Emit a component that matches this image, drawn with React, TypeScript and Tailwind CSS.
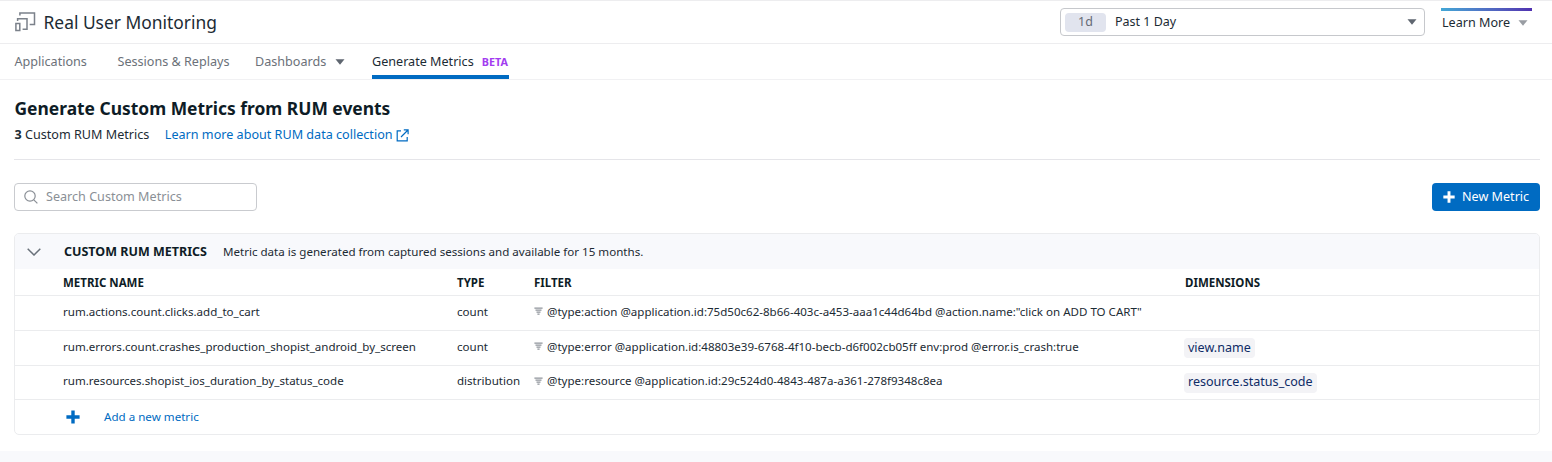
import React from "react";

const rows = [
  {
    name: "rum.actions.count.clicks.add_to_cart",
    type: "count",
    filter: '@type:action @application.id:75d50c62-8b66-403c-a453-aaa1c44d64bd @action.name:"click on ADD TO CART"',
    dimension: "",
  },
  {
    name: "rum.errors.count.crashes_production_shopist_android_by_screen",
    type: "count",
    filter: "@type:error @application.id:48803e39-6768-4f10-becb-d6f002cb05ff env:prod @error.is_crash:true",
    dimension: "view.name",
  },
  {
    name: "rum.resources.shopist_ios_duration_by_status_code",
    type: "distribution",
    filter: "@type:resource @application.id:29c524d0-4843-487a-a361-278f9348c8ea",
    dimension: "resource.status_code",
  },
];

function Caret({ className }: { className: string }) {
  return (
    <svg viewBox="0 0 10 6" className={className} fill="currentColor">
      <path d="M0.5 0.3h9L5 5.7z" />
    </svg>
  );
}

function Plus({ className }: { className: string }) {
  return (
    <svg viewBox="0 0 14 14" className={className} fill="none" stroke="currentColor" strokeWidth="3.4">
      <path d="M7 0.4v13.2M0.4 7h13.2" />
    </svg>
  );
}

function FilterIcon() {
  return (
    <svg viewBox="0 0 9 9" className="size-[9px] shrink-0 text-[#8f949b]" fill="none" stroke="currentColor" strokeWidth="1.25">
      <path d="M0.4 1h8.2M1.5 3h6M2.5 5h4M3.4 7h2.2" />
    </svg>
  );
}

export default function App() {
  return (
    <div className="h-[462px] w-[1552px] overflow-hidden bg-white font-['Noto_Sans',sans-serif] text-[#1c2b34] whitespace-nowrap">
      <header className="flex h-11 items-center border-y border-[#ededef] pl-[15px] pr-5">
        <svg viewBox="0 0 21 20" className="h-5 w-[21px]" fill="none" stroke="#7b818a" strokeWidth="1.5">
          <path d="M4.9 3.4V1h14.6v11.6h-4.8" />
          <path d="M2.6 9V6.8h9.4v10.4H7.6" />
          <path d="M0.9 11.4h3.9v7.2H0.9z" />
        </svg>
        <h1 className="ml-[7.5px] pt-px text-[17.4px]">Real User Monitoring</h1>
        <div className="ml-auto flex h-7 w-[365px] items-center rounded-[4px] border border-[#c6c8cc] pl-1 pr-[7px] text-[12.5px]">
          <span className="flex h-[19px] w-[41px] items-center justify-center rounded-[4px] bg-[#e1e4ee] text-[#656b75]">1d</span>
          <span className="ml-[9px]">Past 1 Day</span>
          <Caret className="ml-auto h-[6px] w-[10px] text-[#5f6670]" />
        </div>
        <div className="ml-4 w-[91px] self-start pt-[7px]">
          <div className="h-[3px] bg-linear-to-r from-[#41a7d6] to-[#5030b0]" />
          <div className="flex h-[23px] items-center text-[12.6px]">
            <span className="ml-px pt-px">Learn More</span>
            <Caret className="ml-2 h-[6px] w-[10px] text-[#999da3]" />
          </div>
        </div>
      </header>

      <nav className="flex h-9 border-b border-[#f1f1f3] pl-[14.5px] text-[12.6px] text-[#6b7179]">
        <span className="flex w-[103px] items-center pt-px">Applications</span>
        <span className="flex w-[137.5px] items-center pt-px">Sessions &amp; Replays</span>
        <span className="flex w-[117px] items-center pt-px">
          Dashboards
          <Caret className="ml-[9px] h-[6px] w-[10px] text-[#5f6670]" />
        </span>
        <span className="flex w-[137px] items-center border-b-4 border-[#006bc2] pt-[5px] text-[#1c2b34]">
          Generate Metrics
          <b className="ml-2 text-[10.8px] font-bold text-[#a23cf0]">BETA</b>
        </span>
      </nav>

      <main className="pr-3 pl-[14px]">
        <h2 className="mt-4 h-6 pl-[0.5px] text-[17.42px] leading-6 font-bold text-[#0e1c26]">Generate Custom Metrics from RUM events</h2>
        <div className="mt-[5px] flex h-5 items-center pl-[0.5px] text-[12.6px]">
          <span><b>3</b> Custom RUM Metrics</span>
          <a className="ml-[15.5px] text-[#006bc2]">Learn more about RUM data collection</a>
          <svg viewBox="0 0 13 13" className="ml-[3.5px] size-[13px] text-[#006bc2]" fill="none" stroke="currentColor" strokeWidth="1.2">
            <path d="M5 1.8H1.2v10h10V8M7.8 0.9h4.3v4.3M12 1L5 8" />
          </svg>
        </div>
        <div className="mt-[14px] border-t border-[#e5e5e9]" />
        <div className="mt-[23px] flex h-7 justify-between">
          <div className="flex w-[243px] items-center rounded-[4px] border border-[#c9cbcf] pl-[9px] text-[12.6px] text-[#8a8f96]">
            <svg viewBox="0 0 14 14" className="mr-2 size-[14px]" fill="none" stroke="currentColor" strokeWidth="1.2">
              <circle cx="6" cy="6" r="5.2" />
              <path d="M9.8 9.8l3.6 3.6" />
            </svg>
            <span className="pt-px">Search Custom Metrics</span>
          </div>
          <button className="flex w-[108px] items-center rounded-[4px] bg-[#006bc2] pl-[11px] text-[12.6px] text-white">
            <Plus className="mr-[7px] size-[12px]" />
            <span className="pt-px">New Metric</span>
          </button>
        </div>

        <section className="mt-[22px] h-[202px] overflow-hidden rounded-[5px] border border-[#ebecee]">
          <div className="flex h-[35px] items-center bg-[#f8f9fc] pl-3">
            <svg viewBox="0 0 14 8" className="h-2 w-[14px]" fill="none" stroke="#69717a" strokeWidth="1.5">
              <path d="M0.7 0.8L7 7l6.3-6.2" />
            </svg>
            <b className="ml-[23px] pt-0.5 text-[12.5px] text-[#0e1c26]">CUSTOM RUM METRICS</b>
            <span className="ml-[16px] pt-px text-[11.58px]">Metric data is generated from captured sessions and available for 15 months.</span>
          </div>
          <div className="grid h-[27px] grid-cols-[394px_77px_651px_1fr] items-center border-b border-[#ebecee] pt-0.5 pl-12 text-[11.5px] font-bold text-[#0e1c26]">
            <span>METRIC NAME</span>
            <span>TYPE</span>
            <span>FILTER</span>
            <span>DIMENSIONS</span>
          </div>
          {rows.map((row) => (
            <div key={row.name} className="grid h-[35px] grid-cols-[394px_77px_651px_1fr] items-center border-b border-[#ebecee] pl-12 text-[11.56px] last-of-type:h-[34px]">
              <span className="pb-[3px]">{row.name}</span>
              <span className="pb-[3px]">{row.type}</span>
              <span className="flex items-center gap-[4px] pb-[3px]">
                <FilterIcon />
                {row.filter}
              </span>
              {row.dimension && (
                <span className="-ml-px flex h-5 w-fit items-center rounded-[4px] bg-[#f3f3f6] px-1 text-[12.55px] text-[#0f2c66]">{row.dimension}</span>
              )}
            </div>
          ))}
          <footer className="flex h-[34px] items-center pl-[51px] text-[11.6px] text-[#006bc2]">
            <Plus className="mr-6 size-[14px]" />
            Add a new metric
          </footer>
        </section>
      </main>
      <footer className="mt-4 h-3 bg-[#f8f9fc]" />
    </div>
  );
}
